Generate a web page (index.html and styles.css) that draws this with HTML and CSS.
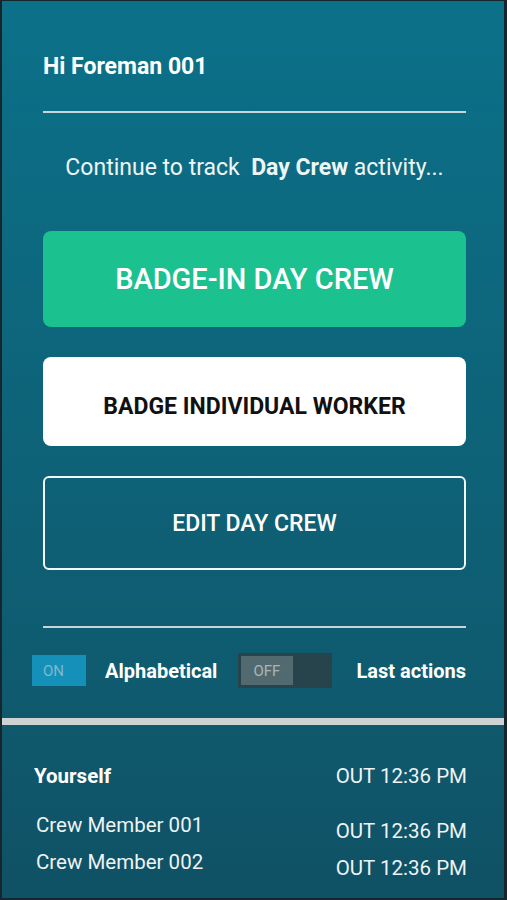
FILE: index.html
```html
<!DOCTYPE html>
<html lang="en">
<head>
  <meta charset="UTF-8" />
  <meta name="viewport" content="width=device-width, initial-scale=1" />
  <title>Foreman</title>
  <link rel="stylesheet" href="styles.css">
</head>
<body>
  <div class="screen">
    <div class="top">
      <h1 class="hello">Hi Foreman 001</h1>
      <hr class="rule rule-top">
      <p class="track">Continue to track&nbsp; <b>Day Crew</b> activity...</p>

      <button class="btn btn-green">BADGE-IN DAY CREW</button>
      <button class="btn btn-white">BADGE INDIVIDUAL WORKER</button>
      <button class="btn btn-outline">EDIT DAY CREW</button>

      <hr class="rule rule-bottom">

      <div class="sorts">
        <span class="toggle on"><span class="thumb">ON</span></span>
        <span class="sort-label">Alphabetical</span>
        <span class="toggle off"><span class="thumb">OFF</span></span>
        <span class="sort-label last">Last actions</span>
      </div>
    </div>

    <div class="bar"></div>

    <ul class="list">
      <li class="row me"><span class="name">Yourself</span><span class="time">OUT 12:36 PM</span></li>
      <li class="row"><span class="name">Crew Member 001</span><span class="time">OUT 12:36 PM</span></li>
      <li class="row"><span class="name">Crew Member 002</span><span class="time">OUT 12:36 PM</span></li>
    </ul>
  </div>
</body>
</html>
```

FILE: styles.css
```css
html, body {
  margin: 0;
  background: #14252b;
}
.screen {
  box-sizing: border-box;
  width: 507px;
  height: 900px;
  border: 2px solid #15262c;
  border-top-width: 1px;
  border-right-width: 3px;
  background: linear-gradient(#0b7189, #0f5a6e 78%, #0f5165);
  color: #fff;
  font-family: Roboto, "Noto Sans", sans-serif;
  display: flex;
  flex-direction: column;
}
.top {
  padding: 0 38px 0 41px;
  display: flex;
  flex-direction: column;
}
.hello {
  margin: 52px 0 0;
  font-size: 23px;
  font-weight: 700;
  line-height: 28px;
}
.rule {
  border: 0;
  height: 2px;
  background: #c6d5da;
  margin: 0;
}
.rule-top { margin-top: 30px; }
.track {
  margin: 42px 0 0;
  text-align: center;
  font-size: 23px;
  line-height: 26px;
  color: #eef5f7;
}
.track b { font-weight: 700; }
.btn {
  font-family: inherit;
  border-radius: 8px;
  border: 0;
  padding: 0;
  text-align: center;
  cursor: pointer;
}
.btn-green {
  margin-top: 50px;
  height: 96px;
  background: #1bc18f;
  color: #fff;
  font-size: 29px;
  font-weight: 500;
}
.btn-white {
  margin-top: 30px;
  height: 89px;
  padding-top: 9px;
  background: #fff;
  color: #111;
  font-size: 23px;
  font-weight: 700;
}
.btn-outline {
  margin-top: 30px;
  height: 94px;
  background: transparent;
  border: 2px solid #f2f6f7;
  border-radius: 6px;
  color: #fff;
  font-size: 23px;
  font-weight: 500;
}
.rule-bottom { margin-top: 56px; }
.sorts {
  margin: 25px 0 0 -11px;
  display: flex;
  align-items: center;
}
.toggle {
  display: flex;
  box-sizing: border-box;
  font-size: 15px;
}
.toggle.on {
  width: 54px;
  height: 31px;
  background: #1590b8;
}
.toggle.on .thumb {
  color: #7fb8cc;
  padding: 7px 0 0 11px;
}
.toggle.off {
  width: 94px;
  height: 35px;
  padding: 3px;
  background: #27444d;
  margin-left: 21px;
}
.toggle.off .thumb {
  width: 52px;
  background: #526a6f;
  color: #a9b6b8;
  display: flex;
  align-items: center;
  padding-left: 12px;
  box-sizing: border-box;
}
.sort-label {
  font-size: 20px;
  font-weight: 700;
  margin-left: 19px;
}
.sort-label.last { margin-left: auto; }
.bar {
  height: 7px;
  margin-top: 30px;
  background: #cfd2d2;
}
.list {
  list-style: none;
  margin: 0;
  padding: 39px 37px 0 32px;
}
.row {
  display: flex;
  justify-content: space-between;
  align-items: flex-start;
  font-size: 20.5px;
  line-height: 24px;
  height: 37px;
  color: #eef3f5;
}
.row .time { margin-top: 6px; }
.row .name { padding-left: 2px; }
.row.me { height: 49px; }
.row.me .time { margin-top: 0; }
.row.me .name {
  font-weight: 700;
  color: #fff;
  padding-left: 0;
}
```
